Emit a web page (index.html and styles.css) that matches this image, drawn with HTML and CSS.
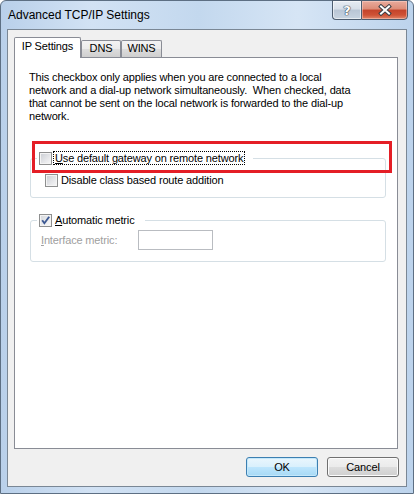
FILE: index.html
```html
<!DOCTYPE html>
<html>
<head>
<meta charset="utf-8">
<title>Advanced TCP/IP Settings</title>
<link rel="stylesheet" href="styles.css">
</head>
<body>
<div class="window">
  <div class="titlebar">
    <span class="title">Advanced TCP/IP Settings</span>
    <div class="caption">
      <div class="cap help"><span class="qmark">?</span></div>
      <div class="cap close">
        <svg width="14" height="12" viewBox="0 0 14 12">
          <path d="M3 2.5 L11 9.5 M11 2.5 L3 9.5" stroke="#3b3f46" stroke-width="4" stroke-linecap="square" fill="none"/>
          <path d="M3 2.5 L11 9.5 M11 2.5 L3 9.5" stroke="#ffffff" stroke-width="2" stroke-linecap="square" fill="none"/>
        </svg>
      </div>
    </div>
  </div>
  <div class="client">
    <div class="tabs">
      <div class="tab active">IP Settings</div>
      <div class="tab dns">DNS</div>
      <div class="tab wins">WINS</div>
    </div>
    <div class="panel">
      <p class="note">This checkbox only applies when you are connected to a local<br>network and a dial-up network simultaneously.&nbsp; When checked, data<br>that cannot be sent on the local network is forwarded to the dial-up<br>network.</p>
      <fieldset class="group g1">
        <legend>
          <span class="check">
            <span class="box"></span>
            <span class="lbl focus"><u>U</u>se default gateway on remote network</span>
          </span>
        </legend>
        <div class="check sub">
          <span class="box"></span>
          <span class="lbl">Disable class based route addition</span>
        </div>
      </fieldset>
      <fieldset class="group g2">
        <legend>
          <span class="check">
            <span class="box checked">
              <svg width="11" height="11" viewBox="0 0 11 11"><path d="M2.2 5.2 L4.4 8.2 L9.2 1.8" fill="none" stroke="#3d5993" stroke-width="1.9"/></svg>
            </span>
            <span class="lbl"><u>A</u>utomatic metric</span>
          </span>
        </legend>
        <div class="metric">
          <span class="disabled"><u>I</u>nterface metric:</span>
          <span class="input"></span>
        </div>
      </fieldset>
      <div class="highlight"></div>
    </div>
    <div class="buttons">
      <button class="btn default">OK</button>
      <button class="btn">Cancel</button>
    </div>
  </div>
</div>
</body>
</html>
```
FILE: styles.css
```css
* { box-sizing: border-box; }
html, body { margin: 0; padding: 0; }
body {
  width: 414px;
  height: 494px;
  overflow: hidden;
  font-family: "Liberation Sans", Arial, sans-serif;
  font-size: 11px;
  letter-spacing: -0.15px;
  color: #000;
  background: #fff;
}

.window {
  width: 414px;
  height: 494px;
  border: 1px solid #5d6f83;
  border-radius: 6px 6px 0 0;
  background: linear-gradient(to right, #b9d0ea 0%, #d2e2f4 22%, #c3d8ee 48%, #d6e5f5 72%, #bcd3ec 100%);
  padding: 0 6px 6px;
  display: flex;
  flex-direction: column;
}

.titlebar {
  height: 28px;
  flex: none;
  display: flex;
  justify-content: space-between;
  align-items: flex-start;
}
.title {
  font-size: 12px;
  letter-spacing: 0;
  line-height: 28px;
  padding-left: 1px;
  color: #000;
}
.caption {
  display: flex;
  margin-top: -1px;
  margin-right: -1px;
}
.cap {
  height: 20px;
  border: 1px solid #4d5d70;
  display: flex;
  align-items: center;
  justify-content: center;
}
.help {
  width: 29px;
  border-right: none;
  border-radius: 0 0 0 4px;
  background: linear-gradient(#e6ecf3 0%, #d7dfe9 45%, #b9c6d5 50%, #c8d4e1 100%);
  box-shadow: inset 0 0 0 1px rgba(255,255,255,0.55);
}
.qmark {
  font-family: "DejaVu Sans", sans-serif;
  font-weight: bold;
  font-size: 13px;
  line-height: 13px;
  letter-spacing: 0;
  color: #fff;
  text-shadow: 0 0 1px #2f3b4a, 0 0 1px #2f3b4a, 0 0 1px #2f3b4a;
}
.close {
  width: 47px;
  border-radius: 0 0 4px 0;
  background: linear-gradient(#e9ab9d 0%, #dd8c77 45%, #c4432b 50%, #cf5236 78%, #e0866a 100%);
  box-shadow: inset 0 0 0 1px rgba(255,220,210,0.45);
}

.client {
  flex: 1;
  border: 1px solid #7a8795;
  background: #f0f0f0;
  padding: 7px 8px 9px 6px;
  display: flex;
  flex-direction: column;
  min-height: 0;
}

.tabs {
  height: 20px;
  flex: none;
  display: flex;
  align-items: flex-end;
}
.tab {
  height: 17px;
  line-height: 15px;
  border: 1px solid #898c95;
  border-bottom: none;
  border-radius: 2px 2px 0 0;
  text-align: center;
  background: linear-gradient(#f3f3f3 0%, #ebebeb 50%, #dddddd 50%, #cfcfcf 100%);
}
.tab.active {
  width: 67px;
  height: 21px;
  line-height: 17px;
  margin-bottom: -1px;
  background: #fff;
  position: relative;
  z-index: 1;
}
.tab.dns { width: 40px; }
.tab.wins { width: 41px; }

.panel {
  flex: 1;
  min-height: 0;
  border: 1px solid #898c95;
  background: #fff;
  position: relative;
}

.note {
  margin: 13px 0 0 14px;
  line-height: 13px;
  white-space: nowrap;
}

.group {
  margin: 28px 11px 0 15px;
  border: 1px solid #d5dfe5;
  border-radius: 3px;
  padding: 0;
  min-width: 0;
}
.group legend {
  margin-left: 6px;
  padding: 0 8px 0 2px;
}
.g1 { padding: 9px 0 10px; }
.g2 { margin-top: 15px; padding: 3px 0 11px; }

.check {
  display: flex;
  align-items: flex-start;
  height: 14px;
}
.box {
  width: 13px;
  height: 13px;
  margin-top: 1px;
  margin-right: 1px;
  border: 1px solid #8e8f8f;
  background: linear-gradient(135deg, #c9ccd2 0%, #e4e5e8 55%, #f8f8f8 100%);
  box-shadow: inset 0 0 0 1px #f4f4f4;
  flex: none;
}
.box.checked {
  background: linear-gradient(135deg, #d3d6db 0%, #ebecee 55%, #fafafa 100%);
}
.box svg { display: block; }
.lbl {
  height: 14px;
  line-height: 12px;
  padding: 0 1px;
  border: 1px solid transparent;
  white-space: nowrap;
}
.lbl.focus { border: 1px dotted #000; }

.sub {
  margin-left: 14px;
  height: 13px;
}
.sub .box { margin-top: 0; margin-right: 3px; }
.sub .lbl { border: none; padding: 0; line-height: 13px; height: 13px; }

.metric {
  display: flex;
  align-items: center;
  padding-left: 10px;
  height: 20px;
}
.disabled {
  width: 97px;
  color: #a0a0a0;
  white-space: nowrap;
}
.input {
  width: 75px;
  height: 20px;
  border: 1px solid #b9bcc1;
  background: #fff;
}

.highlight {
  position: absolute;
  left: 17px;
  top: 83px;
  width: 360px;
  height: 32px;
  border: 3px solid #e41e26;
}

.buttons {
  flex: none;
  display: flex;
  justify-content: flex-end;
  gap: 9px;
  margin-top: 8px;
  margin-right: -1px;
}
.btn {
  width: 72px;
  height: 20px;
  padding: 0;
  border: 1px solid #707070;
  border-radius: 3px;
  font-family: "Liberation Sans", Arial, sans-serif;
  font-size: 11px;
  letter-spacing: -0.15px;
  color: #000;
  background: linear-gradient(#f2f2f2 0%, #ebebeb 50%, #dddddd 50%, #cfcfcf 100%);
  box-shadow: inset 0 0 0 1px #fcfcfc;
}
.btn.default {
  border-color: #3c7fb1;
  background: linear-gradient(#eaf6fd 0%, #d9f0fc 50%, #bee6fd 50%, #a7d9f5 100%);
  box-shadow: inset 0 0 0 1px #c4e8fb;
}
```
